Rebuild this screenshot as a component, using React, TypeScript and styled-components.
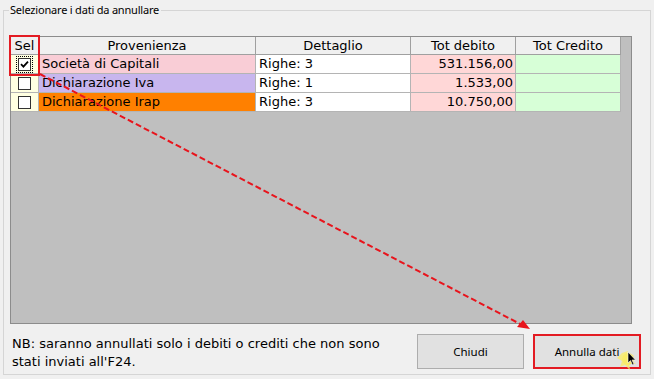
import { Fragment } from 'react';
import styled, { createGlobalStyle } from 'styled-components';

const GlobalStyle = createGlobalStyle`
	html, body {
		margin: 0;
		padding: 0;
		background: #f0f0f0;
		width: 654px;
		height: 379px;
		overflow: hidden;
	}
	* {
		box-sizing: border-box;
	}
`

const Page = styled.div`
	position: relative;
	width: 654px;
	height: 379px;
	padding-top: 2px;
	font-family: "DejaVu Sans", Verdana, sans-serif;
	color: #000;
`

const GroupBox = styled.fieldset`
	margin: 0 3px 0 3px;
	padding: 18px 9px 3px 6px;
	border: 1px solid #d5d5d5;
	min-width: 0;
`

const Legend = styled.legend`
	font-family: "Noto Sans", "Open Sans", sans-serif;
	font-size: 11px;
	letter-spacing: -0.2px;
	line-height: 16px;
	padding: 0 2px 0 1px;
	margin-left: -1px;
	color: #000;
`

const GridPanel = styled.div`
	position: relative;
	width: 622px;
	height: 288px;
	background: #bfbfbf;
	border: 1px solid #8c8c8c;
`

const Table = styled.div`
	display: grid;
	grid-template-columns: 28px 217px 155px 105px 105px;
	grid-template-rows: 18px repeat(3, 19px);
	width: 610px;
`

const HeaderCell = styled.div`
	background: #f0f0f0;
	border-right: 1px solid #a0a0a0;
	border-bottom: 1px solid #a0a0a0;
	font-size: 13px;
	line-height: 17px;
	text-align: center;
	white-space: nowrap;
	overflow: hidden;
`

type CellProps = {
	$bg: string;
	$align?: 'left' | 'right' | 'center';
}

const Cell = styled.div<CellProps>`
	background: ${props => props.$bg};
	border-right: 1px solid #b4b4b4;
	border-bottom: 1px solid #b4b4b4;
	font-size: 13px;
	line-height: 18px;
	padding: 0 2px 0 3px;
	text-align: ${props => props.$align || 'left'};
	white-space: nowrap;
	overflow: hidden;
`

const SelCell = styled.div`
	background: #ffffe1;
	border-right: 1px solid #b4b4b4;
	border-bottom: 1px solid #b4b4b4;
	display: flex;
	align-items: center;
	justify-content: center;
`

const Focus = styled.div<{ $on: boolean }>`
	padding: 1px;
	outline: ${props => (props.$on ? '1px dotted #000' : 'none')};
	display: flex;
`

const Box = styled.div`
	width: 13px;
	height: 13px;
	border: 1px solid #333;
	background: #fff;
	display: flex;
	align-items: center;
	justify-content: center;
`

const RedFrame = styled.div`
	position: absolute;
	left: -2px;
	top: -2px;
	width: 31px;
	height: 41px;
	border: 2px solid #e31b23;
	pointer-events: none;
`

const Footer = styled.div`
	display: flex;
	align-items: flex-start;
	padding-top: 10px;
`

const Note = styled.div`
	flex: 1;
	font-size: 13px;
	line-height: 18px;
	padding: 1px 0 0 2px;
`

const Buttons = styled.div`
	display: flex;
	gap: 9px;
`

const Button = styled.button<{ $highlight?: boolean }>`
	width: ${props => (props.$highlight ? '108px' : '107px')};
	height: 35px;
	background: #e1e1e1;
	border: ${props => (props.$highlight ? '2px solid #e31b23' : '1px solid #adadad')};
	font-family: "Noto Sans", "Open Sans", sans-serif;
	font-size: 11.5px;
	color: #000;
	padding: 0;
`

const Overlay = styled.svg`
	position: absolute;
	left: 0;
	top: 0;
	pointer-events: none;
`

const rows = [
	{ sel: true, name: 'Società di Capitali', color: '#f9cdd6', righe: 3, debito: '531.156,00' },
	{ sel: false, name: 'Dichiarazione Iva', color: '#c8b6ee', righe: 1, debito: '1.533,00' },
	{ sel: false, name: 'Dichiarazione Irap', color: '#ff8000', righe: 3, debito: '10.750,00' },
];

const Check = () => (
	<svg width="9" height="9" viewBox="0 0 9 9">
		<path d="M1 4.2 L3.4 6.6 L8 1.6" stroke="#000" strokeWidth="1.8" fill="none" />
	</svg>
);

const App = () => {
	return (
		<Page>
			<GlobalStyle />
			<GroupBox>
				<Legend>Selezionare i dati da annullare</Legend>
				<GridPanel>
					<Table>
						<HeaderCell>Sel</HeaderCell>
						<HeaderCell>Provenienza</HeaderCell>
						<HeaderCell>Dettaglio</HeaderCell>
						<HeaderCell>Tot debito</HeaderCell>
						<HeaderCell>Tot Credito</HeaderCell>
						{rows.map(r => (
							<Fragment key={r.name}>
								<SelCell>
									<Focus $on={r.sel}>
										<Box>{r.sel && <Check />}</Box>
									</Focus>
								</SelCell>
								<Cell $bg={r.color}>{r.name}</Cell>
								<Cell $bg="#ffffff">Righe: {r.righe}</Cell>
								<Cell $bg="#ffd7d7" $align="right">{r.debito}</Cell>
								<Cell $bg="#d7ffd7" />
							</Fragment>
						))}
					</Table>
					<RedFrame />
				</GridPanel>
				<Footer>
					<Note>
						NB: saranno annullati solo i debiti o crediti che non sono
						<br />
						stati inviati all'F24.
					</Note>
					<Buttons>
						<Button>Chiudi</Button>
						<Button $highlight>Annulla dati</Button>
					</Buttons>
				</Footer>
			</GroupBox>
			<Overlay width="654" height="379" viewBox="0 0 654 379">
				<line x1="40" y1="74" x2="524" y2="326" stroke="#e8141c" strokeWidth="2" strokeDasharray="6 3" />
				<path d="M530 329 L517 327 L523 320 Z" fill="#e8141c" />
				<circle cx="628" cy="359" r="6" fill="#f7e84a" opacity="0.9" />
				<path d="M622 353 L628 351 L627 357 L634 355 L630 360 L636 364 L629 364 L630 370 L625 365 L620 367 L622 361 L617 358 Z" fill="#f9ec6a" opacity="0.8" />
				<path d="M628 352 L628 363 L630.5 360.5 L632.5 365 L634 364.3 L632 360 L635.5 360 Z" fill="#000" stroke="#fff" strokeWidth="0.6" />
			</Overlay>
		</Page>
	);
};

export default App;
